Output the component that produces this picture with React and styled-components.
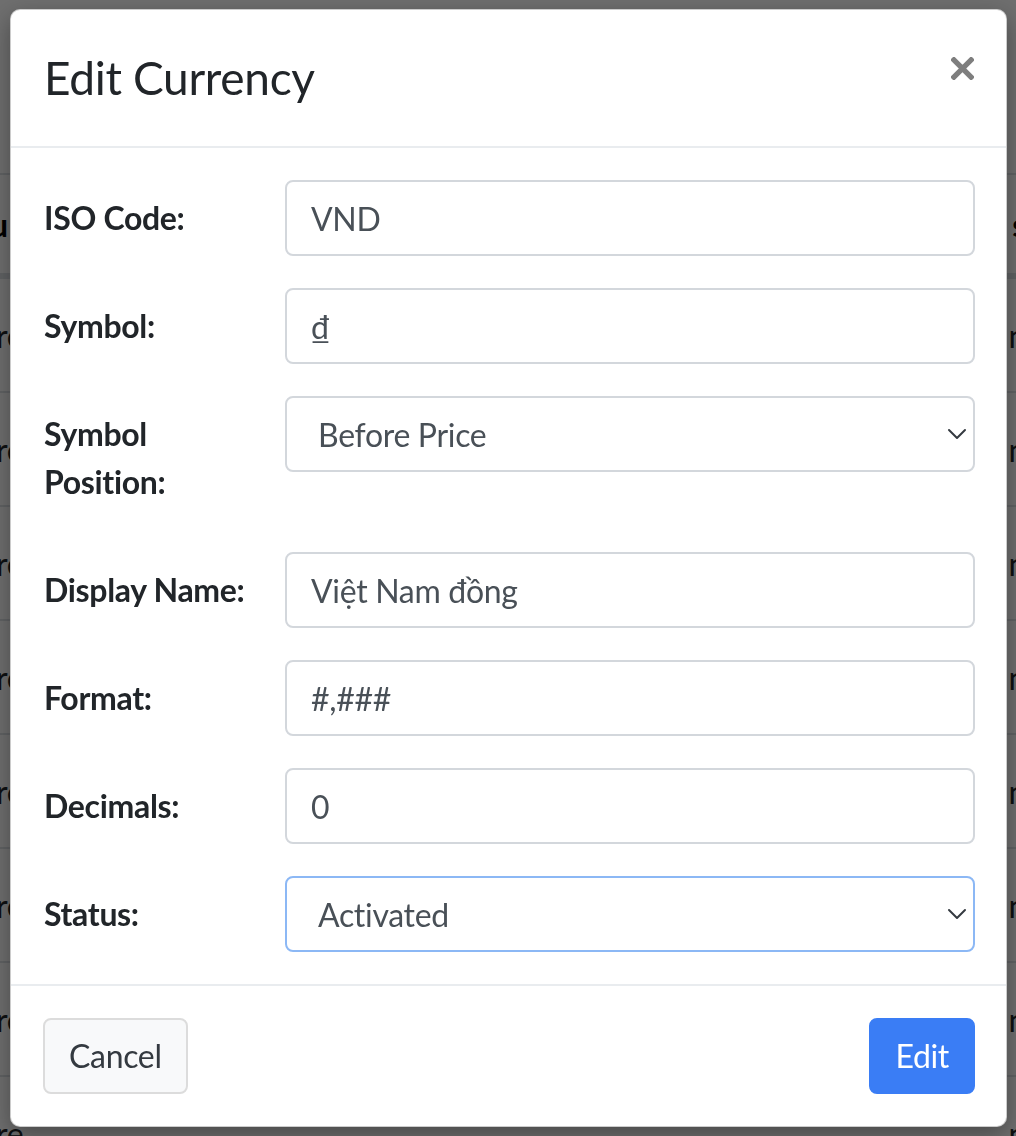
import React from "react";
import styled, { createGlobalStyle } from "styled-components";

const GlobalStyle = createGlobalStyle`
  html, body { margin: 0; padding: 0; background: #fff; }
  body { font-family: "Lato", "Noto Sans", sans-serif; color: #212529; letter-spacing: -0.02em; }
  * { box-sizing: border-box; }
`;

const Page = styled.div`
  position: relative;
  width: 1016px;
  height: 1136px;
  overflow: hidden;
  background: #fff;
`;

const BgTable = styled.div`
  display: flex;
  flex-direction: column;
  padding-top: 173px;
  font-size: 32px;
`;

const BgRow = styled.div`
  display: flex;
  justify-content: space-between;
  align-items: center;
  height: ${(p) => (p.$head ? "104px" : "114px")};
  border-top: 2px solid #dee2e6;
  border-bottom: ${(p) => (p.$head ? "4px solid #dee2e6" : "0")};
  font-weight: ${(p) => (p.$head ? 700 : 400)};
  color: ${(p) => (p.$head ? "#000" : "#212529")};
`;

const BgLeft = styled.span`
  margin-left: ${(p) => (p.$head ? "-10px" : "-4px")};
`;

const BgRight = styled.span`
  margin-right: -10px;
`;

const Backdrop = styled.div`
  position: fixed;
  inset: 0;
  background: rgba(0, 0, 0, 0.57);
  display: flex;
  align-items: flex-start;
  padding: 9px 0 0 10px;
`;

const Modal = styled.div`
  width: 997px;
  background: #fff;
  border: 1px solid rgba(0, 0, 0, 0.2);
  border-radius: 10px;
  box-shadow: 0 8px 24px rgba(0, 0, 0, 0.35);
  display: flex;
  flex-direction: column;
`;

const Header = styled.div`
  display: flex;
  align-items: flex-start;
  justify-content: space-between;
  padding: 32px 32px 32px 33px;
  border-bottom: 2px solid #e9ecef;
`;

const Title = styled.h4`
  margin: 0;
  font-size: 46px;
  font-weight: 400;
  line-height: 72px;
  color: #212529;
`;

const Close = styled.button`
  border: 0;
  background: transparent;
  padding: 0;
  margin: 0;
  width: 24px;
  height: 52px;
  display: flex;
  align-items: center;
  justify-content: center;
  cursor: pointer;
  opacity: 0.5;
`;

const Body = styled.div`
  padding: 32px 32px 32px 33px;
  display: flex;
  flex-direction: column;
  gap: 32px;
`;

const Row = styled.div`
  display: grid;
  grid-template-columns: 241px 1fr;
  align-items: start;
`;

const Label = styled.label`
  font-size: 32px;
  font-weight: 700;
  line-height: 48px;
  padding: 14px 0;
  color: #212529;
  width: ${(p) => (p.$narrow ? "160px" : "auto")};
`;

const Input = styled.input`
  display: block;
  width: 690px;
  height: 76px;
  padding: 12px 24px;
  font-family: inherit;
  letter-spacing: inherit;
  font-size: 32px;
  line-height: 48px;
  color: #495057;
  background: #fff;
  border: 2px solid #d3d7dc;
  border-radius: 8px;
  outline: none;
`;

const SelectBox = styled.div`
  width: 690px;
  height: 76px;
  display: flex;
  align-items: center;
  justify-content: space-between;
  padding: 0 6px 0 31px;
  font-size: 32px;
  color: #495057;
  border: 2px solid ${(p) => (p.$focus ? "#8cb8f5" : "#d3d7dc")};
  border-radius: 8px;
  background: #fff;
`;

const Footer = styled.div`
  display: flex;
  justify-content: space-between;
  align-items: center;
  padding: 32px 31px 32px 32px;
  border-top: 2px solid #e9ecef;
`;

const Button = styled.button`
  font-family: inherit;
  letter-spacing: inherit;
  font-size: 32px;
  line-height: 48px;
  padding: 12px 24px;
  border-radius: 8px;
  border: 2px solid ${(p) => (p.$primary ? "#3a7df5" : "#dcdcdc")};
  background: ${(p) => (p.$primary ? "#3a7df5" : "#f8f9fa")};
  color: ${(p) => (p.$primary ? "#fff" : "#343a40")};
  cursor: pointer;
`;

const Chevron = () => (
  <svg width="20" height="12" viewBox="0 0 20 12" fill="none">
    <path d="M2 2l8 8 8-8" stroke="#343a40" strokeWidth="2" strokeLinecap="round" strokeLinejoin="round" />
  </svg>
);

const CloseIcon = () => (
  <svg width="23" height="23" viewBox="0 0 24 24">
    <path d="M3 3L21 21M21 3L3 21" stroke="#000" strokeWidth="5.5" strokeLinecap="square" />
  </svg>
);

const Field = ({ label, value }) => (
  <Row>
    <Label>{label}</Label>
    <Input defaultValue={value} readOnly />
  </Row>
);

const SelectField = ({ label, value, focus, narrow }) => (
  <Row>
    <Label $narrow={narrow}>{label}</Label>
    <SelectBox $focus={focus}>
      <span>{value}</span>
      <Chevron />
    </SelectBox>
  </Row>
);

export default function App() {
  const rows = Array.from({ length: 8 });
  return (
    <>
      <GlobalStyle />
      <Page>
        <BgTable>
          <BgRow $head>
            <BgLeft $head>u</BgLeft>
            <BgRight>s</BgRight>
          </BgRow>
          {rows.map((_, i) => (
            <BgRow key={i}>
              <BgLeft>re</BgLeft>
              <BgRight>n</BgRight>
            </BgRow>
          ))}
        </BgTable>
        <Backdrop>
          <Modal>
            <Header>
              <Title>Edit Currency</Title>
              <Close aria-label="Close">
                <CloseIcon />
              </Close>
            </Header>
            <Body>
              <Field label="ISO Code:" value="VND" />
              <Field label="Symbol:" value="₫" />
              <SelectField label="Symbol Position:" value="Before Price" narrow />
              <Field label="Display Name:" value="Việt Nam đồng" />
              <Field label="Format:" value="#,###" />
              <Field label="Decimals:" value="0" />
              <SelectField label="Status:" value="Activated" focus />
            </Body>
            <Footer>
              <Button>Cancel</Button>
              <Button $primary>Edit</Button>
            </Footer>
          </Modal>
        </Backdrop>
      </Page>
    </>
  );
}
